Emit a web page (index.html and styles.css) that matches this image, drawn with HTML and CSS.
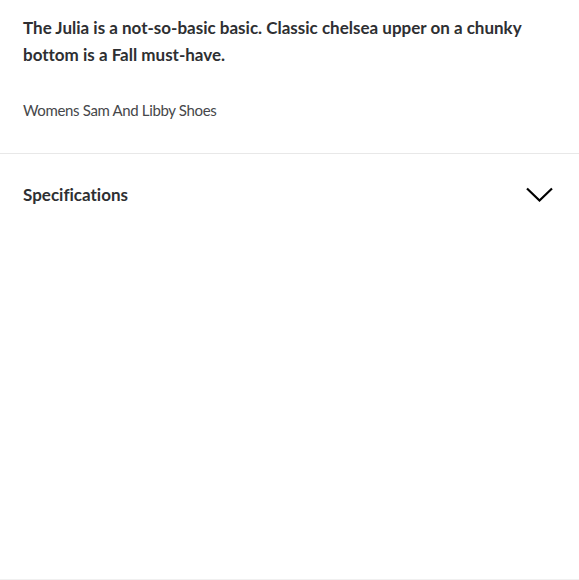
FILE: index.html
```html
<!DOCTYPE html>
<html>
<head>
<meta charset="utf-8">
<link rel="stylesheet" href="styles.css">
</head>
<body>
<div class="page">
  <section class="desc">
    <p class="lead">The Julia is a not-so-basic basic. Classic chelsea upper on a chunky bottom is a Fall must-have.</p>
    <p class="brand">Womens Sam And Libby Shoes</p>
  </section>
  <section class="spec">
    <h2 class="spec-title">Specifications</h2>
    <svg class="chev" width="27" height="15" viewBox="0 0 27 15"><path d="M1 1.5 L13.5 13.5 L26 1.5" fill="none" stroke="#000" stroke-width="2.2"/></svg>
  </section>
</div>
</body>
</html>
```
FILE: styles.css
```css
html, body { margin: 0; padding: 0; background: #fff; }
body { font-family: Lato, "Open Sans", sans-serif; color: #2e2f32; font-variant-ligatures: none; }
.page { width: 579px; height: 580px; box-sizing: border-box; border-bottom: 1px solid #f0f0f0; background: #fff; }
.desc { padding: 14px 23px 0 23px; border-bottom: 1px solid #e8e8e8; height: 154px; box-sizing: border-box; }
.lead { margin: 0; font-weight: 700; font-size: 17px; line-height: 27px; color: #2e2f32; }
.brand { margin: 32px 0 0; font-size: 15px; line-height: 20px; color: #46474a; letter-spacing: -0.35px; }
.spec { display: flex; align-items: center; justify-content: space-between; padding: 0 26px 0 23px; height: 80px; }
.spec-title { margin: 0; font-size: 17px; font-weight: 700; color: #2e2f32; }
.chev { display: block; }
```
